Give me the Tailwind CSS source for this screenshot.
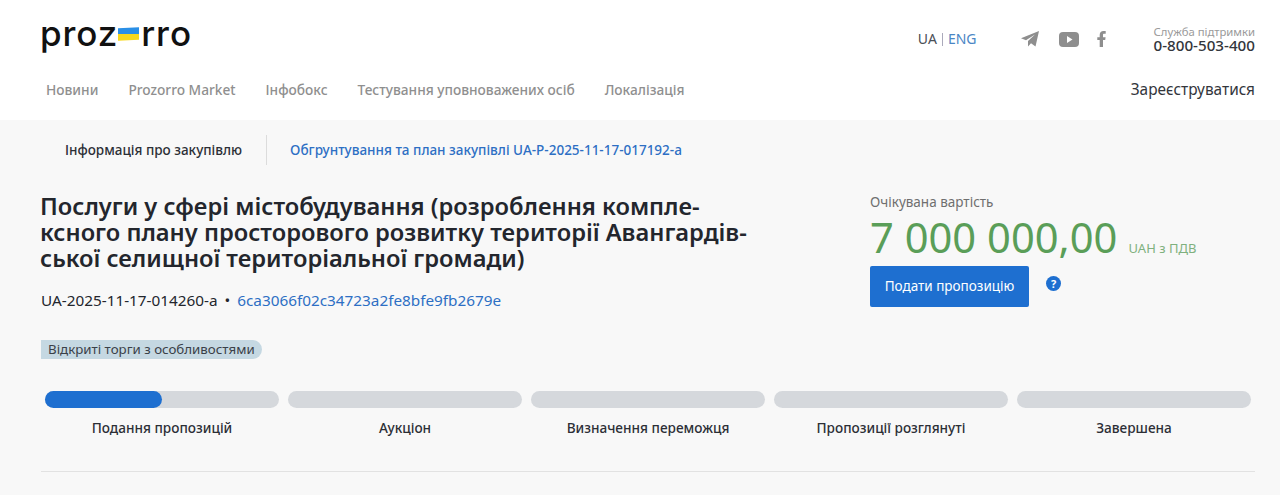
<!DOCTYPE html>
<html lang="uk">
<head>
    <meta charset="UTF-8">
    <meta name="viewport" content="width=device-width, initial-scale=1.0">
    <title>Prozorro</title>
    <script src="https://cdn.jsdelivr.net/npm/@tailwindcss/browser@4"></script>
</head>
<body class="bg-[#f8f8f8] font-['Noto_Sans',sans-serif] text-[#2c2f36] overflow-hidden">
    <!-- header -->
    <header class="bg-white h-[120px] pl-[40px] pr-[25px]">
        <div class="flex items-start h-[66px]">
            <a class="flex items-center h-[30px] mt-[18px] font-['Inter',sans-serif] text-[35px] leading-[30px] font-medium text-[#111] tracking-[0.9px]">
                <span>proz</span>
                <svg class="w-[21px] h-[14px] mt-[2px] ml-[0px] mr-[2px]" viewBox="0 0 22 14">
                    <path d="M0 1 L22 0 V7 L0 7 Z" fill="#2a8fe6"/>
                    <path d="M0 7 H22 V13 L0 14 Z" fill="#f8d81c"/>
                </svg>
                <span>rro</span>
            </a>
            <div class="ml-auto flex items-center mt-[24px]">
                <div class="flex items-center text-sm leading-[30px]">
                    <span class="text-[#4a4f57]">UA</span>
                    <span class="w-px h-[13px] bg-[#aab] mx-[5px]"></span>
                    <a class="text-[#4a86c5]">ENG</a>
                </div>
                <div class="flex items-center ml-[44px] text-[#8e8e8e]">
                    <svg class="w-[18px] h-[16px]" viewBox="0 0 18 16" fill="currentColor"><path d="M18 0 L0 7.2 L5 9.2 L14 3.5 L7 10 V15.5 L10 12.2 L14.5 15.5 Z"/></svg>
                    <svg class="w-[20px] h-[15px] ml-[20px]" viewBox="0 0 20 15"><rect width="20" height="15" rx="4" fill="currentColor"/><path d="M8 4 L13.5 7.5 L8 11 Z" fill="#fff"/></svg>
                    <svg class="w-[9px] h-[16px] ml-[18px]" viewBox="0 0 9 16" fill="currentColor"><path d="M6 16 H2.7 V9 H0.3 V6.2 H2.7 V4 C2.7 1.4 4.2 0 6.5 0 H8.7 V2.8 H7.2 C6.2 2.8 6 3.3 6 4.1 V6.2 H8.6 L8.2 9 H6 Z"/></svg>
                </div>
                <div class="ml-[48px] text-right">
                    <div class="text-[11.3px] leading-[13px] text-[#9a9a9a]">Служба підтримки</div>
                    <div class="text-[15.2px] leading-[16px] font-medium text-[#33363c] mt-[-1px]">0-800-503-400</div>
                </div>
            </div>
        </div>
        <nav class="flex items-center h-[48px] text-[13.7px] font-medium text-[#8f8f8f] pl-[6px]">
            <a>Новини</a>
            <a class="ml-[30px]">Prozorro Market</a>
            <a class="ml-[30px]">Інфобокс</a>
            <a class="ml-[30px]">Тестування уповноважених осіб</a>
            <a class="ml-[30px]">Локалізація</a>
            <a class="ml-auto text-[15.4px] font-normal text-[#33363c]">Зареєструватися</a>
        </nav>
    </header>

    <main class="pl-[40px] pr-[25px]">
        <!-- tabs -->
        <div class="flex items-center h-[59px] text-[13.5px] font-medium pl-px">
            <span class="px-[24px] h-[30px] leading-[30px] text-[#2c2f36]">Інформація про закупівлю</span>
            <a class="border-l border-[#dcdcdc] pl-[23px] h-[30px] leading-[30px] text-[#2d6fc4]">Обгрунтування та план закупівлі UA-P-2025-11-17-017192-a</a>
        </div>

        <div class="flex items-start">
            <div class="w-[830px]">
                <h1 class="text-[23.7px] leading-[26px] font-semibold text-[#23262d] mt-[14px]">Послуги у сфері містобудування (розроблення компле-<br>ксного плану просторового розвитку території Авангардів-<br>ської селищної територіальної громади)</h1>
                <div class="flex items-center text-[15.3px] leading-[20px] mt-[19px] pl-px">
                    <span class="text-[#23262d]">UA-2025-11-17-014260-a</span>
                    <span class="mx-[7px] text-[#23262d]">•</span>
                    <a class="text-[#2d6fc4]">6ca3066f02c34723a2fe8bfe9fb2679e</a>
                </div>
                <span class="inline-block mt-[30px] ml-px bg-[#c5d8e2] rounded-r-full rounded-l-[3px] px-[7px] text-[13.3px] leading-[19px] text-[#3a4048]">Відкриті торги з особливостями</span>
            </div>
            <div class="flex-1 mt-[13px]">
                <div class="text-[13.5px] leading-[20px] text-[#6f6f6f]">Очікувана вартість</div>
                <div class="flex items-baseline">
                    <span class="text-[41.7px] leading-[50px] text-[#5a9e58]">7 000 000,00</span>
                    <span class="ml-[11px] text-[13px] text-[#7fb17e]">UAH з ПДВ</span>
                </div>
                <div class="flex items-start mt-[4px]">
                    <button class="w-[159px] h-[41px] bg-[#1e6fd0] rounded-[2px] text-white text-[13.5px] leading-[41px]">Подати пропозицію</button>
                    <span class="ml-[17px] mt-[10px] w-[15px] h-[15px] rounded-full bg-[#1e6fd0] text-white text-[11px] font-bold leading-[15px] text-center">?</span>
                </div>
            </div>
        </div>

        <!-- status steps -->
        <div class="grid grid-cols-5 gap-[9px] ml-[5px] mr-[4px] mt-[31px]">
            <div>
                <div class="h-[17px] rounded-full bg-[#d5d8dc]"><div class="h-full w-1/2 rounded-full bg-[#1e6fd0]"></div></div>
                <div class="text-center text-[13.6px] font-medium leading-[20px] mt-[10px]">Подання пропозицій</div>
            </div>
            <div>
                <div class="h-[17px] rounded-full bg-[#d5d8dc]"></div>
                <div class="text-center text-[13.6px] font-medium leading-[20px] mt-[10px]">Аукціон</div>
            </div>
            <div>
                <div class="h-[17px] rounded-full bg-[#d5d8dc]"></div>
                <div class="text-center text-[13.6px] font-medium leading-[20px] mt-[10px]">Визначення переможця</div>
            </div>
            <div>
                <div class="h-[17px] rounded-full bg-[#d5d8dc]"></div>
                <div class="text-center text-[13.6px] font-medium leading-[20px] mt-[10px]">Пропозиції розглянуті</div>
            </div>
            <div>
                <div class="h-[17px] rounded-full bg-[#d5d8dc]"></div>
                <div class="text-center text-[13.6px] font-medium leading-[20px] mt-[10px]">Завершена</div>
            </div>
        </div>
        <div class="border-t border-[#e2e2e2] mt-[33px] ml-px"></div>
    </main>
</body>
</html>
